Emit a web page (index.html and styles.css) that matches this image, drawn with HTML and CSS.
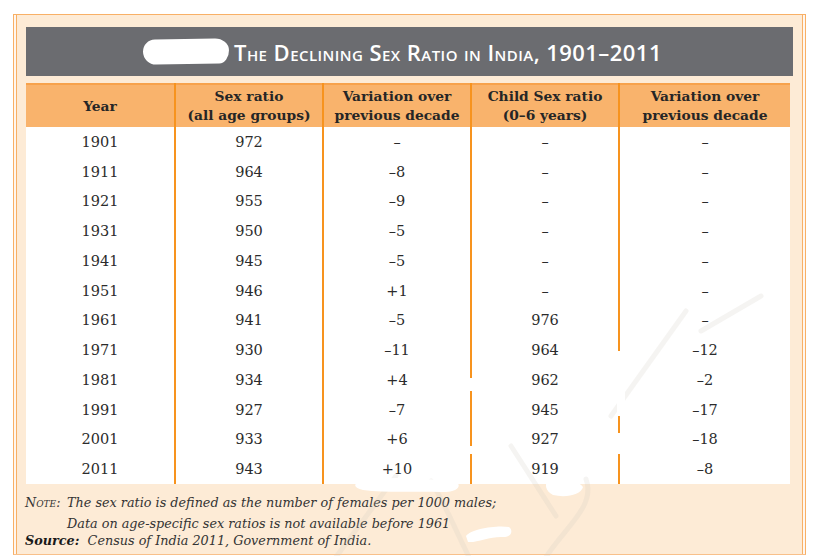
FILE: index.html
```html
<!DOCTYPE html>
<html lang="en">
<head>
<meta charset="utf-8">
<title>The Declining Sex Ratio in India, 1901–2011</title>
<link rel="stylesheet" href="styles.css">
</head>
<body>
<div class="frame">
  <div class="inner">
    <div class="titlebar">
      <span class="blot"></span>
      <h1 class="title">The Declining Sex Ratio in India, 1901–2011</h1>
    </div>
    <table class="data">
      <colgroup>
        <col class="c1"><col class="c2"><col class="c3"><col class="c4"><col class="c5">
      </colgroup>
      <thead>
        <tr>
          <th>Year</th>
          <th>Sex ratio<br>(all age groups)</th>
          <th>Variation over<br>previous decade</th>
          <th>Child Sex ratio<br>(0–6 years)</th>
          <th>Variation over<br>previous decade</th>
        </tr>
      </thead>
      <tbody>
        <tr><td>1901</td><td>972</td><td>–</td><td>–</td><td>–</td></tr>
        <tr><td>1911</td><td>964</td><td>–8</td><td>–</td><td>–</td></tr>
        <tr><td>1921</td><td>955</td><td>–9</td><td>–</td><td>–</td></tr>
        <tr><td>1931</td><td>950</td><td>–5</td><td>–</td><td>–</td></tr>
        <tr><td>1941</td><td>945</td><td>–5</td><td>–</td><td>–</td></tr>
        <tr><td>1951</td><td>946</td><td>+1</td><td>–</td><td>–</td></tr>
        <tr><td>1961</td><td>941</td><td>–5</td><td>976</td><td>–</td></tr>
        <tr><td>1971</td><td>930</td><td>–11</td><td>964</td><td>–12</td></tr>
        <tr><td>1981</td><td>934</td><td>+4</td><td>962</td><td>–2</td></tr>
        <tr><td>1991</td><td>927</td><td>–7</td><td>945</td><td>–17</td></tr>
        <tr><td>2001</td><td>933</td><td>+6</td><td>927</td><td>–18</td></tr>
        <tr><td>2011</td><td>943</td><td>+10</td><td>919</td><td>–8</td></tr>
      </tbody>
    </table>
    <div class="notes">
      <div class="note-row">
        <span class="note-label">Note:</span>
        <div class="note-text">
          <p>The sex ratio is defined as the number of females per 1000 males;</p>
          <p>Data on age-specific sex ratios is not available before 1961</p>
        </div>
      </div>
      <p class="source"><b>Source:</b>&nbsp; Census of India 2011, Government of India.</p>
    </div>
  </div>
  <svg class="watermark" width="827" height="556" viewBox="0 0 827 556" aria-hidden="true">
    <g fill="none" stroke="#cfc6bd" stroke-opacity="0.2" stroke-width="5" stroke-linecap="round">
      <path d="M335 556 L395 475"/>
      <path d="M430 480 C445 505 455 530 468 556"/>
      <path d="M510 445 L555 515"/>
      <path d="M545 556 C565 525 595 505 585 478"/>
      <path d="M610 415 L685 310"/>
      <path d="M700 330 L760 295"/>
    </g>
    <g fill="#ffffff">
      <rect x="468" y="377" width="8" height="13"/>
      <rect x="468" y="445" width="8" height="8"/>
      <rect x="616" y="350" width="8" height="65"/>
      <rect x="616" y="432" width="8" height="21"/>
      <path d="M360 480 C390 474 430 478 455 481 C462 485 455 492 440 491 C415 490 385 492 362 489 C352 487 352 482 360 480 Z"/>
      <path d="M548 478 C560 476 578 479 582 486 C580 494 565 497 552 494 C544 490 543 482 548 478 Z"/>
      <path d="M465 535 C470 528 495 524 508 526 C513 530 510 537 500 536 C488 536 475 542 467 541 Z"/>
    </g>
  </svg>
</div>
</body>
</html>
```

FILE: styles.css
```css
html, body {
  margin: 0;
  padding: 0;
  background: #ffffff;
}

body {
  width: 827px;
  height: 556px;
  overflow: hidden;
}

.frame {
  position: relative;
  margin: 14px 0 0 13px;
  width: 787px;
  height: 539px;
  border: 1px solid #f8b066;
  border-bottom-color: #f8c08a;
  padding: 0 2px;
  background: #fff6ee;
}

.inner {
  height: 100%;
  border-left: 1px solid #f8b066;
  border-right: 1px solid #f8b066;
  background: #fdebd6;
  padding: 12px 9px 0;
  box-sizing: border-box;
}

.titlebar {
  height: 49px;
  background: #6b6c70;
  display: flex;
  align-items: center;
  padding-left: 117px;
}

.blot {
  width: 86px;
  height: 25px;
  background: #ffffff;
  border-radius: 12px 14px 10px 13px / 12px 12px 13px 13px;
  margin-right: 5px;
  transform: rotate(-1deg);
}

.title {
  margin: 0;
  color: #ffffff;
  font-family: "Open Sans", "DejaVu Sans", sans-serif;
  font-weight: 600;
  font-size: 22px;
  font-variant: small-caps;
  letter-spacing: 0.45px;
  line-height: 1;
  white-space: nowrap;
}

.data {
  margin-top: 7px;
  width: 764px;
  border-collapse: collapse;
  table-layout: fixed;
  font-family: "DejaVu Serif", "Liberation Serif", serif;
  color: #2b2b2b;
}

.c1 { width: 149px; }
.c2, .c3, .c4 { width: 148px; }
.c5 { width: 171px; }

.data thead tr {
  background: #f9b36c;
  border-top: 2px solid #f7a24c;
}

.data th {
  height: 42px;
  padding: 0;
  font-size: 13.8px;
  font-weight: bold;
  line-height: 19px;
  color: #262626;
  text-align: center;
  vertical-align: middle;
  border-right: 2px solid #f7931e;
}

.data th:last-child,
.data td:last-child {
  border-right: none;
}

.data tbody {
  background: #ffffff;
}

.data td {
  height: 29.75px;
  padding: 0;
  font-size: 14.5px;
  text-align: center;
  vertical-align: middle;
  border-right: 2px solid #f7931e;
}

.notes {
  padding: 8px 0 0 0;
  margin-left: -1px;
  font-family: "DejaVu Serif", "Liberation Serif", serif;
  font-style: italic;
  font-size: 12.8px;
  color: #333333;
  line-height: 21px;
}

.notes p {
  margin: 0;
}

.note-row {
  display: flex;
}

.note-label {
  width: 42px;
  font-variant: small-caps;
  flex: none;
}

.source {
  line-height: 14px;
}

.source b {
  font-weight: bold;
  color: #1a1a1a;
}

.watermark {
  position: absolute;
  left: -13px;
  top: -14px;
  pointer-events: none;
}
```
